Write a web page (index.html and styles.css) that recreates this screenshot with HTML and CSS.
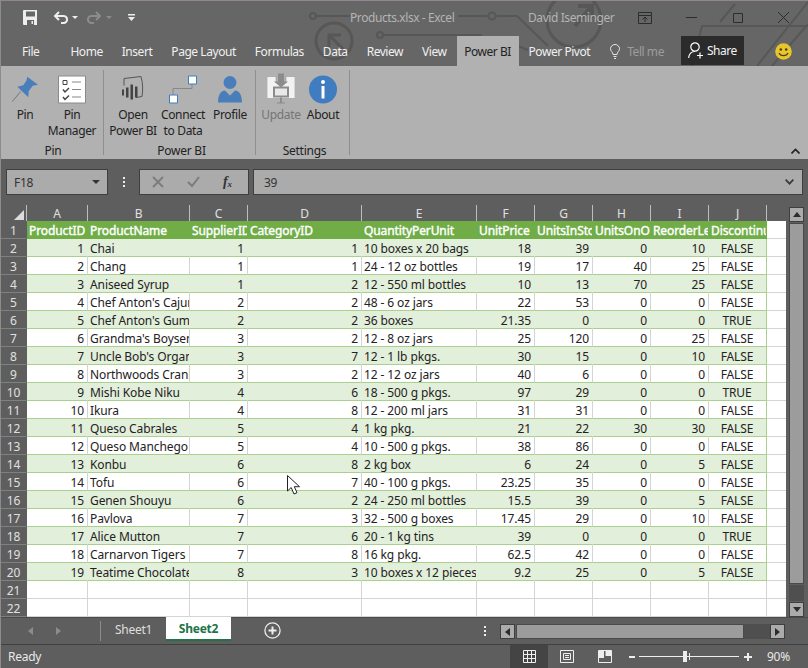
FILE: index.html
```html
<!DOCTYPE html>
<html lang="en">

<head>
    <meta charset="UTF-8">
    <meta name="viewport" content="width=device-width, initial-scale=1.0">
    <title>Products.xlsx - Excel</title>
    <link rel="stylesheet" href="styles.css">
</head>

<body>
    <div class="window">
        <!-- circuit art behind the title bar -->
        <svg class="circuit" width="808" height="66" viewBox="0 0 808 66" fill="none" stroke="#575757" stroke-width="2">
            <circle cx="313" cy="16" r="3"/>
            <path d="M316 16H350"/>
            <circle cx="334" cy="41" r="18" stroke-width="3"/>
            <path d="M329 47V35H341M330 36L343 49" stroke-width="3"/>
            <circle cx="380" cy="35" r="3"/>
            <path d="M383 35H482"/>
            <path d="M458 16H488M496 16H517L548 46"/>
            <circle cx="492" cy="16" r="3.5"/>
            <circle cx="574" cy="20" r="27" stroke-width="3"/>
            <path d="M578 6H592V18M590 8L575 26" stroke-width="4"/>
            <path d="M518 46L528 50" />
            <path d="M692 66L702 26H808M757 66L808 2M772 66L808 24M735 4L720 22"/>
        </svg>

        <header class="titlebar">
            <div class="qat">
                <svg class="save" width="15" height="15" viewBox="0 0 15 15"><path d="M0 1a1 1 0 0 1 1-1h13v15H1a1 1 0 0 1-1-1z" fill="#eee"/><path d="M3 1.500h9v5H3z" fill="#666"/><path d="M4 10h7v5H4z" fill="#666"/><path d="M8.500 11h1.500v3H8.500z" fill="#eee"/></svg>
                <svg class="undo" width="15" height="14" viewBox="0 0 15 14" fill="none" stroke="#eee" stroke-width="2"><path d="M6 1L2 5l4 4M2 5h8a3.500 3.500 0 0 1 1 7H8"/></svg>
                <span class="caret"></span>
                <svg class="redo" width="15" height="14" viewBox="0 0 15 14" fill="none" stroke="#8c8c8c" stroke-width="2"><path d="M9 1l4 4-4 4M13 5H5a3.500 3.500 0 0 0-1 7h3"/></svg>
                <span class="caret off"></span>
                <svg class="custom" width="7" height="8" viewBox="0 0 7 8"><path d="M0 0h7v1.500H0zM0 3h7L3.500 7z" fill="#eee"/></svg>
            </div>
            <span class="doc">Products.xlsx - Excel</span>
            <span class="user">David Iseminger</span>
            <div class="winbtns">
                <svg width="14" height="12" viewBox="0 0 14 12" fill="none" stroke="#2c2c2c"><path d="M.5 3.500h13v8H.5zM.5 .5h13v3H.5zM7 10V5M4.500 7.500L7 5l2.500 2.500"/></svg>
                <svg width="11" height="11" viewBox="0 0 11 11" stroke="#2c2c2c"><path d="M0 5.500h11"/></svg>
                <svg width="10" height="10" viewBox="0 0 10 10" fill="none" stroke="#2c2c2c"><path d="M.5 .5h9v9h-9z"/></svg>
                <svg width="11" height="11" viewBox="0 0 11 11" stroke="#2c2c2c"><path d="M0 0l11 11M11 0L0 11"/></svg>
            </div>
        </header>

        <nav class="tabs">
            <span class="tab file">File</span>
            <span class="tab">Home</span>
            <span class="tab">Insert</span>
            <span class="tab">Page Layout</span>
            <span class="tab">Formulas</span>
            <span class="tab">Data</span>
            <span class="tab">Review</span>
            <span class="tab">View</span>
            <span class="tab active">Power BI</span>
            <span class="tab">Power Pivot</span>
            <span class="tell">
                <svg width="10" height="15" viewBox="0 0 10 15" fill="none" stroke="#e6e6e6"><path d="M3 10.500C3 8 .5 7.500 .5 4.700a4.500 4.200 0 0 1 9 0C9.500 7.500 7 8 7 10.500zM3.500 12.500h3M4 14.500h2"/></svg>
                Tell me
            </span>
            <span class="share">
                <svg width="16" height="17" viewBox="0 0 16 17" fill="none" stroke="#fff" stroke-width="1.200"><circle cx="7" cy="5" r="4.200"/><path d="M.6 16c.5-4 3-6.500 6.400-6.500M12 10.500v6M9 13.500h6"/></svg>
                Share
            </span>
            <svg class="smiley" width="17" height="17" viewBox="0 0 17 17"><circle cx="8.500" cy="8.500" r="8.300" fill="#e8c52b"/><circle cx="5.800" cy="6.500" r="1.300" fill="#4a3d10"/><circle cx="11.200" cy="6.500" r="1.300" fill="#4a3d10"/><path d="M4 10c1.500 3.500 7.500 3.500 9 0" fill="none" stroke="#4a3d10" stroke-width="1.200"/></svg>
        </nav>

        <section class="ribbon">
            <div class="group group-pin">
                <div class="btns">
                    <div class="rbtn w44">
                        <svg class="ico" width="26" height="26" viewBox="0 0 78 78"><path d="M0 76L26 45" stroke="#777" stroke-width="3"/><path d="M46 1L78 25 62 28 50 44 49 62 16 31 34 26 43 13z" fill="#4a7ebb"/></svg>
                        <span>Pin</span>
                    </div>
                    <div class="rbtn w50">
                        <svg class="ico" width="28" height="28" viewBox="0 0 28 28" fill="none"><path d="M.5 .5h27v27H.5z" fill="#fff" stroke="#8a8a8a"/><path d="M5 5h4v4H5z" stroke="#444"/><path d="M14 6.500h9M14 14h9M14 21.500h9" stroke="#888"/><path d="M5 14l2 2.500 4-4M5 21.500l2 2.500 4-4" stroke="#444" stroke-width="1.500"/></svg>
                        <span>Pin<br>Manager</span>
                    </div>
                </div>
                <div class="glabel">Pin</div>
            </div>
            <div class="group group-bi">
                <div class="btns">
                    <div class="rbtn w50">
                        <svg class="ico" width="24" height="28" viewBox="0 0 24 28" fill="none"><path d="M3 10V3L20 1c2 7 2 14 1 20l-6 1" stroke="#555"/><path d="M1 14h2v6H1zM5 12h2.500v10H5zM9.500 9H12v15H9.500zM14 11h2.500v11H14z" fill="#444"/></svg>
                        <span>Open<br>Power BI</span>
                    </div>
                    <div class="rbtn w50">
                        <svg class="ico" width="28" height="28" viewBox="0 0 28 28"><path d="M4 19v-6h19V8" fill="none" stroke="#888"/><path d="M19.500 .5h8v8h-8zM.5 19.500h8v8h-8z" fill="#fff" stroke="#3d7cc4"/></svg>
                        <span>Connect<br>to Data</span>
                    </div>
                    <div class="rbtn w44">
                        <svg class="ico" width="24" height="28" viewBox="0 0 24 28"><circle cx="12" cy="7" r="6.500" fill="#4a7ebb"/><path d="M0 27c0-8 3-12 7-12l5 5 5-5c4 0 7 4 7 12z" fill="#4a7ebb"/><path d="M9 14.500l3 4 3-4z" fill="#b0b0b0"/></svg>
                        <span>Profile</span>
                    </div>
                </div>
                <div class="glabel">Power BI</div>
            </div>
            <div class="group group-set">
                <div class="btns">
                    <div class="rbtn w42 off">
                        <svg class="ico" width="28" height="32" viewBox="0 0 28 32"><path d="M0 3h9v6h10V3h9v22H0z" fill="#f2f2f2" stroke="#999" stroke-width=".6"/><path d="M11 0h6v8h4l-7 6-7-6h4z" fill="#8c8c8c"/><path d="M6 13h16v11H6z" fill="#8c8c8c"/><path d="M8 15h12v7H8z" fill="#e8e8e8"/><path d="M13 24h2v5h-2zM10 29h8v1h-8z" fill="#8c8c8c"/></svg>
                        <span>Update</span>
                    </div>
                    <div class="rbtn w42">
                        <svg class="ico" width="28" height="28" viewBox="0 0 28 28"><circle cx="14" cy="14" r="14" fill="#3f7cc0"/><circle cx="14" cy="6.500" r="2" fill="#fff"/><path d="M12.500 10.500h3V23h-3z" fill="#fff"/></svg>
                        <span>About</span>
                    </div>
                </div>
                <div class="glabel">Settings</div>
            </div>
            <svg class="collapse" width="9" height="6" viewBox="0 0 9 6" fill="none" stroke="#222" stroke-width="1.600"><path d="M.5 5.500l4-4 4 4"/></svg>
        </section>

        <section class="formula">
            <div class="namebox"><span>F18</span><i class="down"></i></div>
            <div class="vdots"><i></i><i></i><i></i></div>
            <div class="fxbtns">
                <svg width="12" height="12" viewBox="0 0 12 12" stroke="#7c7c7c" stroke-width="1.800"><path d="M1 1l10 10M11 1L1 11"/></svg>
                <svg width="13" height="12" viewBox="0 0 13 12" fill="none" stroke="#7c7c7c" stroke-width="2"><path d="M1 6l4 4 7-9"/></svg>
                <span class="fx">f<sub>x</sub></span>
            </div>
            <div class="fxinput"><span>39</span>
                <svg width="9" height="6" viewBox="0 0 9 6" fill="none" stroke="#3a3a3a" stroke-width="1.800"><path d="M.6 .6l3.900 4 3.900-4"/></svg>
            </div>
        </section>

        <section class="grid-area">
            <table class="sheet">
                <colgroup>
                    <col class="c-rh"><col class="c-a"><col class="c-b"><col class="c-c"><col class="c-d"><col class="c-e"><col class="c-n"><col class="c-n"><col class="c-n"><col class="c-n"><col class="c-n"><col class="c-k">
                </colgroup>
                <thead>
                    <tr><th class="corner"><i></i></th><th>A</th><th>B</th><th>C</th><th>D</th><th>E</th><th>F</th><th>G</th><th>H</th><th>I</th><th>J</th><th></th></tr>
                </thead>
                <tbody>
                    <tr class="head"><th>1</th><td>ProductID</td><td>ProductName</td><td>SupplierID</td><td>CategoryID</td><td>QuantityPerUnit</td><td>UnitPrice</td><td>UnitsInStock</td><td>UnitsOnOrder</td><td>ReorderLevel</td><td>Discontinued</td><td></td></tr>
                    <tr><th>2</th><td>1</td><td>Chai</td><td>1</td><td>1</td><td>10 boxes x 20 bags</td><td>18</td><td>39</td><td>0</td><td>10</td><td>FALSE</td><td></td></tr>
                    <tr><th>3</th><td>2</td><td>Chang</td><td>1</td><td>1</td><td>24 - 12 oz bottles</td><td>19</td><td>17</td><td>40</td><td>25</td><td>FALSE</td><td></td></tr>
                    <tr><th>4</th><td>3</td><td>Aniseed Syrup</td><td>1</td><td>2</td><td>12 - 550 ml bottles</td><td>10</td><td>13</td><td>70</td><td>25</td><td>FALSE</td><td></td></tr>
                    <tr><th>5</th><td>4</td><td>Chef Anton's Cajun Seasoning</td><td>2</td><td>2</td><td>48 - 6 oz jars</td><td>22</td><td>53</td><td>0</td><td>0</td><td>FALSE</td><td></td></tr>
                    <tr><th>6</th><td>5</td><td>Chef Anton's Gumbo Mix</td><td>2</td><td>2</td><td>36 boxes</td><td>21.35</td><td>0</td><td>0</td><td>0</td><td>TRUE</td><td></td></tr>
                    <tr><th>7</th><td>6</td><td>Grandma's Boysenberry Spread</td><td>3</td><td>2</td><td>12 - 8 oz jars</td><td>25</td><td>120</td><td>0</td><td>25</td><td>FALSE</td><td></td></tr>
                    <tr><th>8</th><td>7</td><td>Uncle Bob's Organic Dried Pears</td><td>3</td><td>7</td><td>12 - 1 lb pkgs.</td><td>30</td><td>15</td><td>0</td><td>10</td><td>FALSE</td><td></td></tr>
                    <tr><th>9</th><td>8</td><td>Northwoods Cranberry Sauce</td><td>3</td><td>2</td><td>12 - 12 oz jars</td><td>40</td><td>6</td><td>0</td><td>0</td><td>FALSE</td><td></td></tr>
                    <tr><th>10</th><td>9</td><td>Mishi Kobe Niku</td><td>4</td><td>6</td><td>18 - 500 g pkgs.</td><td>97</td><td>29</td><td>0</td><td>0</td><td>TRUE</td><td></td></tr>
                    <tr><th>11</th><td>10</td><td>Ikura</td><td>4</td><td>8</td><td>12 - 200 ml jars</td><td>31</td><td>31</td><td>0</td><td>0</td><td>FALSE</td><td></td></tr>
                    <tr><th>12</th><td>11</td><td>Queso Cabrales</td><td>5</td><td>4</td><td>1 kg pkg.</td><td>21</td><td>22</td><td>30</td><td>30</td><td>FALSE</td><td></td></tr>
                    <tr><th>13</th><td>12</td><td>Queso Manchego La Pastora</td><td>5</td><td>4</td><td>10 - 500 g pkgs.</td><td>38</td><td>86</td><td>0</td><td>0</td><td>FALSE</td><td></td></tr>
                    <tr><th>14</th><td>13</td><td>Konbu</td><td>6</td><td>8</td><td>2 kg box</td><td>6</td><td>24</td><td>0</td><td>5</td><td>FALSE</td><td></td></tr>
                    <tr><th>15</th><td>14</td><td>Tofu</td><td>6</td><td>7</td><td>40 - 100 g pkgs.</td><td>23.25</td><td>35</td><td>0</td><td>0</td><td>FALSE</td><td></td></tr>
                    <tr><th>16</th><td>15</td><td>Genen Shouyu</td><td>6</td><td>2</td><td>24 - 250 ml bottles</td><td>15.5</td><td>39</td><td>0</td><td>5</td><td>FALSE</td><td></td></tr>
                    <tr><th>17</th><td>16</td><td>Pavlova</td><td>7</td><td>3</td><td>32 - 500 g boxes</td><td>17.45</td><td>29</td><td>0</td><td>10</td><td>FALSE</td><td></td></tr>
                    <tr><th>18</th><td>17</td><td>Alice Mutton</td><td>7</td><td>6</td><td>20 - 1 kg tins</td><td>39</td><td>0</td><td>0</td><td>0</td><td>TRUE</td><td></td></tr>
                    <tr><th>19</th><td>18</td><td>Carnarvon Tigers</td><td>7</td><td>8</td><td>16 kg pkg.</td><td>62.5</td><td>42</td><td>0</td><td>0</td><td>FALSE</td><td></td></tr>
                    <tr><th>20</th><td>19</td><td>Teatime Chocolate Biscuits</td><td>8</td><td>3</td><td>10 boxes x 12 pieces</td><td>9.2</td><td>25</td><td>0</td><td>5</td><td>FALSE</td><td></td></tr>
                    <tr class="empty"><th>21</th><td></td><td></td><td></td><td></td><td></td><td></td><td></td><td></td><td></td><td></td><td></td></tr>
                    <tr class="empty"><th>22</th><td></td><td></td><td></td><td></td><td></td><td></td><td></td><td></td><td></td><td></td><td></td></tr>
                </tbody>
            </table>
            <div class="vscroll">
                <div class="sbtn"><i class="tri up"></i></div>
                <div class="vthumb"></div>
                <div class="vtrack"></div>
                <div class="sbtn"><i class="tri dn"></i></div>
            </div>
        </section>

        <section class="sheetbar">
            <div class="tabnav"><i class="tri lf"></i><i class="tri rt"></i></div>
            <div class="stabs">
                <span class="stab">Sheet1</span>
                <span class="stab current">Sheet2</span>
            </div>
            <svg class="addsheet" width="17" height="17" viewBox="0 0 17 17" fill="none" stroke="#eee" stroke-width="1.300"><circle cx="8.500" cy="8.500" r="7.600"/><path d="M8.500 4.500v8M4.500 8.500h8" stroke-width="2"/></svg>
            <div class="vdots sheetdots"><i></i><i></i><i></i></div>
            <div class="hscroll">
                <div class="sbtn"><i class="tri lf dark"></i></div>
                <div class="hthumb"></div>
                <div class="htrack"></div>
                <div class="sbtn"><i class="tri rt dark"></i></div>
            </div>
        </section>

        <footer class="status">
            <span class="ready">Ready</span>
            <div class="views">
                <span class="view on"><svg width="13" height="13" viewBox="0 0 13 13" fill="none" stroke="#eee"><path d="M.5 .5h12v12H.5zM.5 4.500h12M.5 8.500h12M4.500 .5v12M8.500 .5v12"/></svg></span>
                <span class="view"><svg width="14" height="13" viewBox="0 0 14 13" fill="none" stroke="#eee"><path d="M.5 .5h13v12H.5zM3.500 3.500h7v6h-7zM5 5.500h4M5 7.500h4"/></svg></span>
                <span class="view"><svg width="14" height="13" viewBox="0 0 14 13"><path d="M.5 .5h13v12H.5z" fill="none" stroke="#eee"/><path d="M1 1h5v7H1zM7.500 1H13v5H7.500z" fill="#eee"/></svg></span>
            </div>
            <div class="zoom">
                <i class="minus"></i>
                <div class="slider"><i class="notch"></i><i class="knob"></i></div>
                <i class="plus"></i>
                <span class="pct">90%</span>
            </div>
        </footer>

        <svg class="cursor" width="13" height="20" viewBox="0 0 13 20"><path d="M.5 .5V16l3.700-3.500L7 19l3-1.300-2.700-6H12.500z" fill="#fff" stroke="#222"/></svg>
    </div>
</body>

</html>
```
FILE: styles.css
```css
* {
    box-sizing: border-box;
}

body {
    margin: 0;
    background: #5e5e5e;
    font-family: "Noto Sans", "Open Sans", sans-serif;
    font-size: 12px;
    letter-spacing: -.25px;
}

.window {
    position: relative;
    width: 808px;
    height: 668px;
    overflow: hidden;
    display: flex;
    flex-direction: column;
    background: #5e5e5e;
    border-left: 1px solid #8c8c8c;
    color: #222;
}

.circuit {
    position: absolute;
    top: 0;
    left: -1px;
}

/* title bar */
.titlebar {
    position: relative;
    height: 36px;
    flex: none;
    display: flex;
    align-items: center;
    padding-bottom: 2px;
    background: transparent;
    border-top: 1px solid #93878f;
    color: #b4b4b4;
    letter-spacing: -.42px;
}

.window::before {
    content: "";
    position: absolute;
    top: 0;
    left: 0;
    width: 100%;
    height: 66px;
    background: #666;
}

.circuit, .titlebar, .tabs {
    z-index: 1;
}

.qat {
    width: 349px;
    display: flex;
    align-items: center;
    padding-left: 22px;
}

.undo {
    margin-left: 15px;
}

.caret {
    width: 0;
    height: 0;
    margin-left: 4px;
    border: 3px solid transparent;
    border-top: 3px solid #eee;
    border-bottom: 0;
}

.caret.off {
    border-top-color: #8c8c8c;
}

.redo {
    margin-left: 9px;
}

.custom {
    margin-left: 16px;
}

.doc {
    width: 178px;
}

.user {
    width: 110px;
}

.winbtns {
    display: flex;
    align-items: center;
}

.winbtns svg:nth-child(2) {
    margin-left: 34px;
}

.winbtns svg:nth-child(3) {
    margin-left: 36px;
}

.winbtns svg:nth-child(4) {
    margin-left: 35px;
}

/* ribbon tabs */
.tabs {
    position: relative;
    height: 30px;
    flex: none;
    display: flex;
    align-items: center;
    gap: 19px;
    padding-left: 21px;
    color: #f0f0f0;
    white-space: nowrap;
    letter-spacing: -.45px;
}

.tab.file {
    margin-right: 12px;
}

.tab.active {
    align-self: stretch;
    width: 62px;
    margin: 0 -9px;
    display: flex;
    align-items: center;
    justify-content: center;
    background: #b1b1b1;
    color: #222;
}

.tell {
    display: flex;
    align-items: center;
    gap: 7px;
    margin-left: 1px;
    color: #9d9d9d;
}

.share {
    align-self: stretch;
    width: 63px;
    margin: 0 0 1px -2px;
    display: flex;
    align-items: center;
    justify-content: center;
    gap: 3px;
    background: #2b2b2b;
    color: #f4f4f4;
}

.smiley {
    margin-left: 12px;
}

/* ribbon */
.ribbon {
    position: relative;
    z-index: 1;
    height: 93px;
    flex: none;
    display: flex;
    padding-top: 4px;
    background: #b1b1b1;
}

.group {
    display: flex;
    flex-direction: column;
    height: 85px;
    border-right: 1px solid #8f8f8f;
}

.group-pin {
    width: 103px;
    padding-left: 2px;
}

.group-bi {
    width: 152px;
    padding-left: 4px;
}

.group-set {
    width: 94px;
    padding-left: 4px;
}

.btns {
    display: flex;
    flex: none;
    height: 71px;
}

.rbtn {
    display: flex;
    flex-direction: column;
    align-items: center;
    text-align: center;
    line-height: 16px;
    white-space: nowrap;
    letter-spacing: -.35px;
}

.rbtn span {
    margin-top: 1px;
}

.ico {
    height: 36px;
    flex: none;
    padding-top: 3px;
}

.rbtn.w44 {
    width: 44px;
}

.rbtn.w50 {
    width: 50px;
}

.rbtn.w42 {
    width: 42px;
}

.rbtn.off span {
    color: #757575;
}

.glabel {
    height: 17px;
    flex: none;
    line-height: 19px;
    text-align: center;
}

.collapse {
    position: absolute;
    right: 8px;
    bottom: 5px;
}

/* formula bar */
.formula {
    height: 46px;
    flex: none;
    display: flex;
    align-items: flex-start;
    padding: 10px 0 0 5px;
}

.namebox, .fxbtns, .fxinput {
    height: 26px;
    display: flex;
    align-items: center;
    background: #ababab;
    border: 1px solid #3f3f3f;
    color: #333;
}

.namebox {
    width: 102px;
    justify-content: space-between;
    padding: 0 7px;
}

.down {
    border: 4px solid transparent;
    border-top: 4px solid #333;
    border-bottom: 0;
}

.vdots {
    display: flex;
    flex-direction: column;
    gap: 2px;
    width: 31px;
    align-items: center;
    padding-top: 8px;
}

.vdots i {
    width: 2px;
    height: 2px;
    background: #eee;
}

.fxbtns {
    width: 110px;
    padding-left: 12px;
    gap: 23px;
}

.fx {
    font-family: "Liberation Serif", serif;
    font-style: italic;
    font-weight: bold;
    font-size: 14px;
}

.fx sub {
    font-size: 9px;
    vertical-align: -1px;
}

.fxinput {
    width: 550px;
    margin-left: 4px;
    justify-content: space-between;
    padding: 0 8px 0 10px;
}

/* sheet grid */
.grid-area {
    height: 412px;
    flex: none;
    display: flex;
}

.sheet {
    width: 785px;
    height: 412px;
    table-layout: fixed;
    border-collapse: separate;
    border-spacing: 0;
    flex: none;
    letter-spacing: -.1px;
}

.c-rh { width: 26px; }
.c-a { width: 61px; }
.c-b { width: 102px; }
.c-c { width: 58px; }
.c-d { width: 114px; }
.c-e { width: 115px; }
.c-n { width: 58px; }
.c-k { width: 19px; }

.sheet tr {
    height: 18px;
}

.sheet thead tr {
    height: 16px;
}

.sheet th {
    padding: 0;
    background: #5e5e5e;
    color: #e0e0e0;
    font-weight: normal;
    text-align: center;
    overflow: hidden;
}

.sheet thead th {
    border-right: 1px solid #bdbdbd;
    line-height: 15px;
}

.sheet thead th:last-child {
    border-right: 0;
}

.sheet tbody th {
    padding-top: 3px;
    line-height: 14px;
    border-right: 1px solid #5e5e5e;
    border-bottom: 1px solid #808080;
}

.corner {
    position: relative;
}

.corner i {
    position: absolute;
    right: 2px;
    bottom: 1px;
    border-left: 10px solid transparent;
    border-bottom: 10px solid #dcdcdc;
}

.sheet td {
    padding: 3px 3px 0 2px;
    background: #fff;
    color: #222;
    border-right: 1px solid #d4d4d4;
    border-bottom: 1px solid #a9d08e;
    text-align: right;
    white-space: nowrap;
    overflow: hidden;
    line-height: 14px;
}

.sheet td:nth-child(3), .sheet td:nth-child(6) {
    text-align: left;
}

.sheet td:nth-child(11) {
    text-align: center;
    border-right-color: #a9d08e;
}

.sheet td:nth-child(12) {
    border-right: 0;
    border-bottom-color: #d4d4d4;
}

.sheet tbody tr:not(.empty):nth-child(even) td {
    background: #e2efda;
    border-right-color: #e2efda;
}

.sheet tbody tr:not(.empty):nth-child(even) td:nth-child(11) {
    border-right-color: #a9d08e;
}

.sheet tbody tr:not(.empty):nth-child(even) td:nth-child(12) {
    background: #fff;
}

.sheet tr.head td {
    background: #70ad47;
    border-right-color: #70ad47;
    border-bottom-color: #70ad47;
    color: #fff;
    -webkit-text-stroke: .4px #fff;
    text-align: left;
}

.sheet tr.head td:nth-child(12) {
    background: #fff;
    border-bottom-color: #d4d4d4;
}

.sheet tr.empty td {
    background: #fff;
    border-right-color: #d4d4d4;
    border-bottom-color: #d4d4d4;
}

.vscroll {
    width: 15px;
    margin: 2px 0 0 3px;
    display: flex;
    flex-direction: column;
    gap: 1px;
}

.sbtn {
    flex: none;
    width: 15px;
    height: 15px;
    display: flex;
    align-items: center;
    justify-content: center;
    background: #ababab;
    border: 1px solid #3f3f3f;
}

.vthumb {
    height: 361px;
    background: #9c9c9c;
    border: 1px solid #4a4a4a;
}

.vtrack {
    flex: 1;
    background: #4f4f4f;
}

.tri {
    display: block;
    width: 0;
    height: 0;
    border: 4px solid transparent;
}

.tri.up {
    border-top: 0;
    border-bottom: 5px solid #2b2b2b;
}

.tri.dn {
    border-bottom: 0;
    border-top: 5px solid #2b2b2b;
}

.tri.lf {
    border-left: 0;
    border-right: 5px solid #8c8c8c;
}

.tri.rt {
    border-right: 0;
    border-left: 5px solid #8c8c8c;
}

.tri.lf.dark {
    border-right-color: #2b2b2b;
}

.tri.rt.dark {
    border-left-color: #2b2b2b;
}

/* sheet tabs */
.sheetbar {
    height: 28px;
    flex: none;
    display: flex;
    align-items: flex-start;
    border-bottom: 1px solid #404040;
    border-top: 1px solid #4a4a4a;
}

.tabnav {
    width: 100px;
    height: 20px;
    margin-top: 3px;
    display: flex;
    align-items: center;
    gap: 23px;
    padding-left: 27px;
    border-right: 1px solid #8c8c8c;
}

.stabs {
    display: flex;
    height: 24px;
    margin-top: -1px;
}

.stab {
    width: 65px;
    display: flex;
    align-items: center;
    justify-content: center;
    color: #dedede;
}

.stab.current {
    margin-left: 0;
    background: #fff;
    border-bottom: 2px solid #217346;
    color: #217346;
    font-weight: bold;
}

.addsheet {
    margin: 4px 0 0 33px;
}

.sheetdots {
    width: 10px;
    margin-left: 199px;
}

.hscroll {
    display: flex;
    width: 285px;
    margin: 6px 0 0 10px;
}

.hthumb {
    width: 228px;
    height: 15px;
    margin-left: 1px;
    background: #9c9c9c;
    border: 1px solid #4a4a4a;
}

.htrack {
    flex: 1;
    height: 15px;
    background: #4f4f4f;
}

/* status bar */
.status {
    flex: 1;
    display: flex;
    align-items: center;
    padding-left: 7px;
    color: #e8e8e8;
}

.ready {
    width: 502px;
}

.views {
    display: flex;
    align-self: stretch;
}

.view {
    width: 38px;
    display: flex;
    align-items: center;
    justify-content: center;
}

.view.on {
    background: #444;
}

.zoom {
    display: flex;
    align-items: center;
    margin-left: 5px;
}

.minus {
    width: 6px;
    height: 2px;
    background: #eee;
}

.slider {
    position: relative;
    width: 100px;
    height: 1px;
    margin: 0 5px 0 4px;
    background: #eee;
}

.knob {
    position: absolute;
    left: 44px;
    top: -5px;
    width: 4px;
    height: 11px;
    background: #eee;
}

.notch {
    position: absolute;
    left: 50px;
    top: -3px;
    width: 1px;
    height: 7px;
    background: #eee;
}

.plus {
    position: relative;
    width: 8px;
    height: 2px;
    background: #eee;
}

.plus::after {
    content: "";
    position: absolute;
    left: 3px;
    top: -3px;
    width: 2px;
    height: 8px;
    background: #eee;
}

.pct {
    margin-left: 15px;
}

.cursor {
    position: absolute;
    left: 286px;
    top: 475px;
    z-index: 2;
}
```
